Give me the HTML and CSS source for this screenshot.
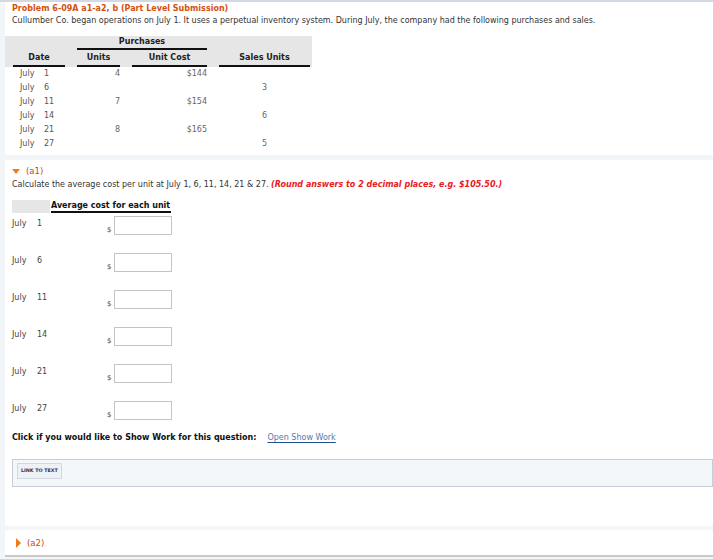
FILE: index.html
```html
<!DOCTYPE html>
<html>
<head>
<meta charset="utf-8">
<link rel="stylesheet" href="styles.css">
</head>
<body>
<div class="panel p1">
  <div class="title">Problem 6-09A a1-a2, b (Part Level Submission)</div>
  <div class="desc">Cullumber Co. began operations on July 1. It uses a perpetual inventory system. During July, the company had the following purchases and sales.</div>
  <table class="inv">
    <thead>
      <tr class="h1">
        <th class="c-date"></th>
        <th colspan="2" class="c-purch"><div class="ul">Purchases</div></th>
        <th class="c-sales"></th>
      </tr>
      <tr class="h2">
        <th class="c-date"><div class="ul">Date</div></th>
        <th class="c-units"><div class="ul">Units</div></th>
        <th class="c-cost"><div class="ul">Unit Cost</div></th>
        <th class="c-sales"><div class="ul">Sales Units</div></th>
      </tr>
    </thead>
    <tbody>
      <tr><td class="c-date"><span class="mo">July</span>1</td><td class="c-units">4</td><td class="c-cost">$144</td><td class="c-sales"></td></tr>
      <tr><td class="c-date"><span class="mo">July</span>6</td><td class="c-units"></td><td class="c-cost"></td><td class="c-sales">3</td></tr>
      <tr><td class="c-date"><span class="mo">July</span>11</td><td class="c-units">7</td><td class="c-cost">$154</td><td class="c-sales"></td></tr>
      <tr><td class="c-date"><span class="mo">July</span>14</td><td class="c-units"></td><td class="c-cost"></td><td class="c-sales">6</td></tr>
      <tr><td class="c-date"><span class="mo">July</span>21</td><td class="c-units">8</td><td class="c-cost">$165</td><td class="c-sales"></td></tr>
      <tr><td class="c-date"><span class="mo">July</span>27</td><td class="c-units"></td><td class="c-cost"></td><td class="c-sales">5</td></tr>
    </tbody>
  </table>
</div>

<div class="panel p2">
  <div class="part"><span class="tri-down"></span><span class="plabel">(a1)</span></div>
  <div class="desc">Calculate the average cost per unit at July 1, 6, 11, 14, 21 &amp; 27. <span class="note">(Round answers to 2 decimal places, e.g. $105.50.)</span></div>
  <div class="avg">
    <div class="avg-head">
      <div class="ah-blank"></div>
      <div class="ah-title">Average cost for each unit</div>
    </div>
    <div class="avg-row"><div class="lab"><span class="mo2">July</span>1</div><div class="ans"><span class="dol">$</span><span class="box"></span></div></div>
    <div class="avg-row"><div class="lab"><span class="mo2">July</span>6</div><div class="ans"><span class="dol">$</span><span class="box"></span></div></div>
    <div class="avg-row"><div class="lab"><span class="mo2">July</span>11</div><div class="ans"><span class="dol">$</span><span class="box"></span></div></div>
    <div class="avg-row"><div class="lab"><span class="mo2">July</span>14</div><div class="ans"><span class="dol">$</span><span class="box"></span></div></div>
    <div class="avg-row"><div class="lab"><span class="mo2">July</span>21</div><div class="ans"><span class="dol">$</span><span class="box"></span></div></div>
    <div class="avg-row last"><div class="lab"><span class="mo2">July</span>27</div><div class="ans"><span class="dol">$</span><span class="box"></span></div></div>
  </div>
  <div class="showwork">Click if you would like to Show Work for this question:<a class="swlink">Open Show Work</a></div>
  <div class="linkbox"><span class="linkbtn">LINK TO TEXT</span></div>
</div>

<div class="panel p3">
  <div class="part"><span class="tri-right"></span><span class="plabel">(a2)</span></div>
</div>
</body>
</html>
```

FILE: styles.css
```css
html, body {
  margin: 0;
  padding: 0;
}
body {
  background: #f3f6f9;
  border-top: 2px solid #d3d9e3;
  font-family: "DejaVu Sans", Verdana, sans-serif;
  font-size: 8px;
  color: #333;
  width: 713px;
  height: 559px;
  overflow: hidden;
  box-sizing: border-box;
}
.panel {
  background: #fff;
  margin-left: 5px;
}
.p1 {
  height: 153px;
  padding-top: 2px;
  box-sizing: border-box;
}
.title {
  color: #d4520f;
  font-weight: bold;
  line-height: 10px;
  padding-left: 7px;
}
.desc {
  line-height: 10px;
  padding-left: 7px;
  color: #333;
}
.p1 .desc { margin-top: 2px; }
.inv {
  border-collapse: collapse;
  margin-top: 10px;
}
.inv thead th {
  background: #e6e6e6;
  font-weight: bold;
  color: #222;
  padding: 0 6px;
  text-align: center;
}
.inv .h1 th { height: 14px; vertical-align: top; }
.inv .h2 th { height: 17px; vertical-align: bottom; }
.inv .ul {
  border-bottom: 2px solid #111;
  line-height: 10px;
}
.inv .h1 .ul { padding-top: 1px; padding-bottom: 1px; }
.inv .h2 .ul { padding-bottom: 2px; padding-top: 3px; }
.inv th.c-date { padding-left: 8px; }
.inv th.c-sales { padding-right: 2px; }
.inv .c-date .ul { width: 52px; }
.inv .c-units .ul { width: 43px; }
.inv .c-cost .ul { width: 75px; }
.inv .c-sales .ul { width: 91px; }
.inv .c-purch .ul { width: 130px; }
.inv td {
  height: 14px;
  line-height: 14px;
  padding: 0 6px;
  color: #555;
}
.inv td.c-date { padding-left: 15px; }
.inv td.c-units, .inv td.c-cost { text-align: right; color: #666; }
.inv td.c-sales { text-align: center; padding-right: 2px; color: #666; }
.mo { display: inline-block; width: 24px; }

.p2 {
  margin-top: 5px;
  height: 366px;
  padding-top: 6px;
  box-sizing: border-box;
}
.part {
  display: flex;
  align-items: center;
  padding-left: 7px;
  height: 10px;
}
.tri-down {
  width: 0; height: 0;
  border-left: 4.5px solid transparent;
  border-right: 4.5px solid transparent;
  border-top: 5px solid #f07a1c;
  margin-right: 6px;
}
.tri-right {
  width: 0; height: 0;
  border-top: 5.5px solid transparent;
  border-bottom: 5.5px solid transparent;
  border-left: 5px solid #f07a1c;
  margin-left: 2px;
  margin-right: 6px;
}
.plabel {
  color: #d4401a;
  line-height: 10px;
  font-size: 8.5px;
}
.p2 .desc { margin-top: 4px; }
.note {
  color: #e8201e;
  font-weight: bold;
  font-style: italic;
}
.avg {
  margin-top: 10px;
  padding-left: 7px;
}
.avg-head {
  display: flex;
  height: 13px;
}
.ah-blank {
  width: 38px;
  background: #e6e6e6;
}
.ah-title {
  margin-left: 1px;
  width: 120px;
  font-weight: bold;
  color: #111;
  line-height: 10px;
  padding-top: 1px;
  border-bottom: 2px solid #111;
  box-sizing: border-box;
  height: 13px;
}
.avg-row {
  display: flex;
  height: 37px;
}
.avg-row.last { height: 35px; }
.lab {
  width: 95px;
  padding-top: 6px;
  line-height: 10px;
  color: #444;
}
.mo2 { display: inline-block; width: 17px; margin-right: 8px; }
.ans {
  display: flex;
  align-items: flex-end;
  height: 22px;
}
.dol {
  font-size: 7px;
  line-height: 8px;
  color: #444;
  margin-right: 3px;
  margin-bottom: 1px;
}
.box {
  display: block;
  width: 58px;
  height: 19px;
  border: 1px solid #c4c4c4;
  box-sizing: border-box;
  background: #fff;
}
.showwork {
  padding-left: 7px;
  font-weight: bold;
  color: #111;
  line-height: 10px;
}
.swlink {
  font-weight: normal;
  color: #5a7aa6;
  margin-left: 11px;
  text-decoration: underline;
  text-decoration-color: #1e4f8a;
  text-underline-offset: 2px;
}
.linkbox {
  margin-top: 16px;
  margin-left: 7px;
  height: 28px;
  background: #f4f7fa;
  border: 1px solid #c6cdd8;
  box-sizing: border-box;
  padding: 3px 0 0 4px;
}
.linkbtn {
  display: inline-block;
  font-size: 4.8px;
  font-weight: bold;
  color: #1f3560;
  background: #eef1f5;
  border: 1px solid #d3d8e0;
  padding: 4px 3px;
  line-height: 6px;
}
.p3 {
  margin-top: 4px;
  height: 27px;
  padding-top: 8px;
  box-sizing: border-box;
  border-bottom: 2px solid #c9c9c9;
}
.p3 .part { padding-left: 9px; }
```
